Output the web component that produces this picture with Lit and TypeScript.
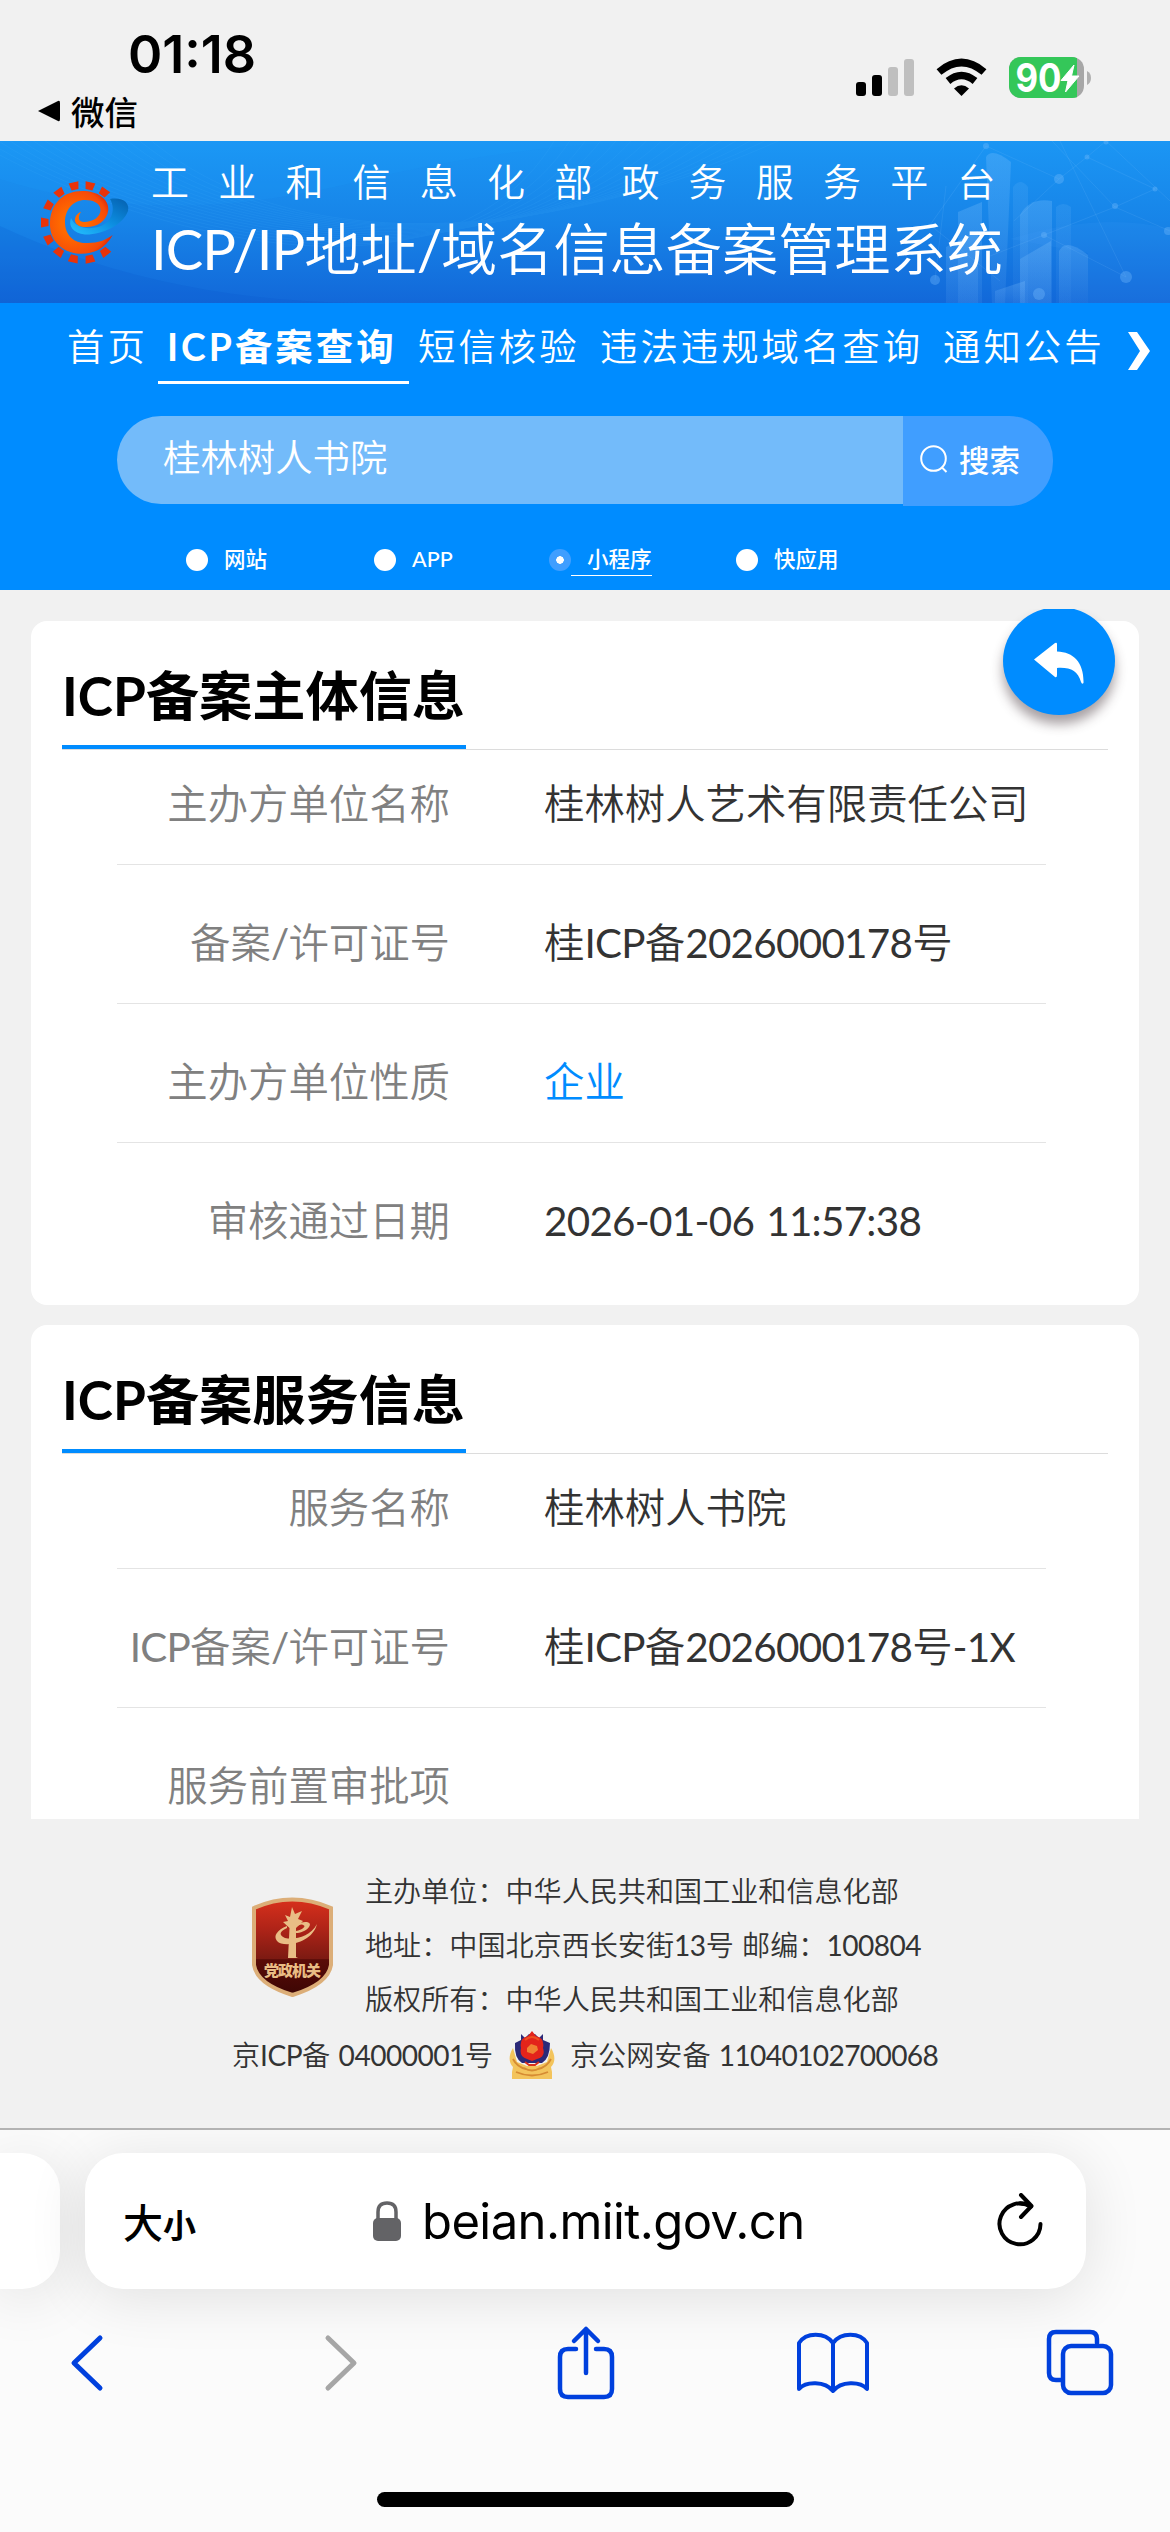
import {css, html, LitElement, svg} from 'lit';
import {customElement, property} from 'lit/decorators.js';
import {classMap} from 'lit/directives/class-map.js';

interface Row {
    label: string;
    value: string;
    link?: boolean;
}

const subjectRows: Row[] = [
    {label: '主办方单位名称', value: '桂林树人艺术有限责任公司'},
    {label: '备案/许可证号', value: '桂ICP备2026000178号'},
    {label: '主办方单位性质', value: '企业', link: true},
    {label: '审核通过日期', value: '2026-01-06 11:57:38'},
];

const serviceRows: Row[] = [
    {label: '服务名称', value: '桂林树人书院'},
    {label: 'ICP备案/许可证号', value: '桂ICP备2026000178号-1X'},
    {label: '服务前置审批项', value: ''},
];

const latinStyles = css`
    .latin {
        font-weight: 400;
        letter-spacing: -0.018em;
        word-spacing: 0.06em;
    }
`;

// Wraps latin runs, they are set tighter than the chinese text around them
const mixed = (text: string) =>
    text.split(/([A-Za-z0-9/:\- ]+)/).map((part, i) => (i % 2 ? html`<span class="latin">${part}</span>` : part));

@customElement('status-bar')
class StatusBar extends LitElement {
    static styles = css`
        :host {
            display: flex;
            justify-content: space-between;
            height: 141px;
            box-sizing: border-box;
            padding: 25px 76px 0 38px;
            background: #f1f1f1;
            color: #000;
        }
        .time {
            margin-left: 90px;
            height: 60px;
            font: 600 52px/60px Inter, sans-serif;
            letter-spacing: 0;
        }
        .back {
            display: flex;
            align-items: center;
            gap: 11px;
            height: 51px;
            font: 500 33.5px/51px "Noto Sans CJK SC", sans-serif;
        }
        .icons {
            display: block;
            margin-top: 28px;
        }
        .percent {
            font: 700 39px Inter, sans-serif;
        }
    `;

    render() {
        return html`
            <div>
                <div class="time">01:18</div>
                <div class="back">
                    <svg width="22" height="22" viewBox="0 0 22 22"><path d="M0 11 20 1Q22 0 22 3V19Q22 22 20 21Z"/></svg>
                    <span>微信</span>
                </div>
            </div>
            <svg class="icons" width="240" height="50" viewBox="0 0 240 50">
                <g transform="translate(0 6)">
                    <rect x="2" y="23" width="10" height="14" rx="3"/>
                    <rect x="18" y="16" width="10" height="21" rx="3"/>
                    <rect x="34" y="8" width="10" height="29" rx="3" fill="#bfbfbf"/>
                    <rect x="50" y="0" width="10" height="37" rx="3" fill="#bfbfbf"/>
                </g>
                <g transform="translate(82.500 6)">
                    <path d="M25 37 17.500 29.500Q25 23 32.500 29.500Z"/>
                    <g fill="none" stroke="#000" stroke-width="7.500">
                        <path d="M2.500 13Q25-6 47.500 13"/>
                        <path d="M11.500 22Q25 11 38.500 22"/>
                    </g>
                </g>
                <clipPath id="cell"><rect x="155" y="4" width="75" height="41" rx="12"/></clipPath>
                <g clip-path="url(#cell)">
                    <rect x="155" y="4" width="75" height="41" fill="#a7a7a7"/>
                    <rect x="155" y="4" width="68" height="41" fill="#34c759"/>
                </g>
                <path d="M233 18Q237 20 237 25T233 32Z" fill="#b0b0b0"/>
                <text class="percent" x="161.500" y="38.500" fill="#fff" textLength="46" lengthAdjust="spacingAndGlyphs">90</text>
                <path d="M220 12 207 27.500H214L211.500 39 225 23H217.500Z" fill="#fff" stroke="#fff" stroke-linejoin="round"/>
            </svg>
        `;
    }
}

@customElement('site-banner')
class SiteBanner extends LitElement {
    static styles = [latinStyles, css`
        :host {
            display: grid;
            height: 162px;
            overflow: hidden;
            background: linear-gradient(#1b96f4, #1784e8 50%, #1268d9);
            color: #fff;
        }
        .art, .content {
            grid-area: 1 / 1;
        }
        .content {
            display: flex;
            padding-left: 40px;
        }
        .logo {
            margin-top: 40px;
        }
        .titles {
            margin-left: 21px;
            white-space: nowrap;
        }
        .small {
            padding-top: 12px;
            font: 350 38px/56px Lato, "Noto Sans CJK SC", sans-serif;
            letter-spacing: 29.2px;
        }
        .large {
            padding-top: 2px;
            font: 350 56.2px/76px Lato, "Noto Sans CJK SC", sans-serif;
        }
    `];

    private waves() {
        return Array.from({length: 16}, (_, i) => svg`
            <path d="M${-40 + i * 12} ${-10}C${60 + i * 16} ${60 + i * 5} ${440 + i * 10} ${210 - i * 8} ${560 + i * 16} -10"/>
        `);
    }

    private teeth() {
        // The gear is open on the right, where the swoosh leaves it
        return [-54, -78, -102, -127, -153, -180, -207, -232, -257, -282, -308].map((a) => svg`
            <path d="M33.500-3.500 41-5V5L33.500 3.500Z" transform="rotate(${a})"/>
        `);
    }

    render() {
        return html`
            <svg class="art" width="1170" height="162" viewBox="0 0 1170 162">
                <defs>
                    <linearGradient id="bar" x2="0" y2="1">
                        <stop stop-color="#8cc8ff" stop-opacity=".25"/>
                        <stop offset="1" stop-color="#8cc8ff" stop-opacity=".09"/>
                    </linearGradient>
                </defs>
                <path d="M0 38Q160 90 360 40T800 0H0Z" fill="#20a4ff" opacity=".12"/>
                <path d="M0 85Q160 160 360 162H0Z" fill="#0a50c8" opacity=".14"/>
                <g fill="none" stroke="#45b4ff" opacity=".12">${this.waves()}</g>
                <g fill="url(#bar)">
                    <path d="M986 16Q992 6 1011 21L1005 162H992Z"/>
                    <path d="M958 71 982 61V162H958Z"/>
                    <path d="M1013 46Q1020 36 1028 46V162H1013Z" opacity=".5"/>
                    <path d="M1020 74Q1030 56 1052 60V162H1020Z"/>
                    <path d="M1056 66Q1063 60 1071 66V162H1056Z" opacity=".5"/>
                    <path d="M1059 110Q1066 96 1088 114V162H1059Z"/>
                    <path d="M946 106 978 90V162H946Z"/>
                    <path d="M1020 118 1051 100V162H1020Z"/>
                    <path d="M995 150 1025 140V162H995Z"/>
                </g>
                <path d="M1010 98Q1100 70 1170 88V162H1088V112Z" fill="#4da3ff" opacity=".1"/>
                <g fill="none" stroke="#8cc8ff" opacity=".13">
                    <path d="M986 5 930 84 1000 140M986 5 1059 38M1106 0 1087 16 1059 38 1014 80M1106 0 1170 60M1052 0 1115 66 1170 90M1060 0 1126 136M1115 66 1155 48 1087 16M1115 66 1044 94 990 115M1044 94 1126 136M935 139 946 45"/>
                </g>
                <g fill="#7cc0ff" opacity=".33">
                    <circle cx="986" cy="5" r="3"/><circle cx="1059" cy="38" r="5"/><circle cx="1087" cy="16" r="2.500"/>
                    <circle cx="1106" cy="1" r="2.500"/><circle cx="1115" cy="65" r="3"/><circle cx="1155" cy="48" r="2.500"/>
                    <circle cx="1126" cy="136" r="6"/><circle cx="935" cy="139" r="5"/><circle cx="1039" cy="153" r="6"/>
                    <circle cx="1044" cy="94" r="3"/><circle cx="1168" cy="90" r="4"/>
                </g>
            </svg>
            <div class="content">
                <svg class="logo" width="90" height="84" viewBox="0 0 90 84">
                    <defs>
                        <radialGradient id="gear" gradientUnits="userSpaceOnUse" cx="34" cy="42" r="42">
                            <stop offset=".3" stop-color="#ff6a00"/>
                            <stop offset=".8" stop-color="#f64a08"/>
                            <stop offset="1" stop-color="#d81e06"/>
                        </radialGradient>
                        <linearGradient id="swoosh" x1="0" y1="1" x2="1" y2="0">
                            <stop stop-color="#25c0ff"/>
                            <stop offset=".5" stop-color="#0d8fe2"/>
                            <stop offset="1" stop-color="#045fae"/>
                        </linearGradient>
                    </defs>
                    <path fill="url(#swoosh)" d="M70 18C83 16 90 22 88 30C83 44 62 54 45 53.500C33 52 28 45 31 37C35 46 46 49 58 46C70 43 77 30 70 18Z"/>
                    <g transform="translate(42 41.500)" fill="#e8330a">${this.teeth()}</g>
                    <path fill="url(#gear)" d="M72.700 54C64 70 50 74 36 72.500C18 69 9 56 10 40.700C11 22 24 10 42 10C58 10 69 18 68.300 29C67 41 55 47 44 46C33 45 32 35 41 30.700C37 37 39 41 44 41C53 41 60.500 36 60.500 29C60.500 22 53 19 45 19C33 19 25 29 25 41C25 56 36 63 48 62C58 62 66 59 72.700 54Z"/>
                </svg>
                <div class="titles">
                    <div class="small">工业和信息化部政务服务平台</div>
                    <div class="large">${mixed('ICP/IP地址/域名信息备案管理系统')}</div>
                </div>
            </div>
        `;
    }
}

@customElement('search-panel')
class SearchPanel extends LitElement {
    static styles = css`
        :host {
            display: block;
            height: 287px;
            overflow: hidden;
            background: #008cff;
            color: #fff;
            font-family: Lato, "Noto Sans CJK SC", sans-serif;
        }
        .nav {
            display: flex;
            height: 81px;
            padding-left: 58px;
            white-space: nowrap;
            font-size: 37.4px;
            font-weight: 350;
            line-height: 87px;
            letter-spacing: 3px;
        }
        .item {
            box-sizing: border-box;
            height: 81px;
            padding: 0 9px;
        }
        .item:first-child {
            width: 100px;
        }
        .item.active {
            width: 251px;
            border-bottom: 3px solid #fff;
            font-weight: 700;
        }
        .item:nth-child(3) {
            width: 182px;
        }
        .item:nth-child(4) {
            width: 343px;
        }
        .item:nth-child(5) {
            width: 194px;
        }
        .arrow {
            margin-top: 29px;
        }
        .search {
            display: flex;
            align-items: flex-start;
            width: 936px;
            margin: 32px 0 0 117px;
        }
        .field {
            box-sizing: border-box;
            width: 786px;
            height: 88px;
            padding-left: 46px;
            border-radius: 44px 0 0 44px;
            background: #73bbfa;
            font-size: 37.4px;
            font-weight: 350;
            line-height: 84px;
        }
        .button {
            display: flex;
            align-items: center;
            box-sizing: border-box;
            gap: 11px;
            width: 150px;
            height: 90px;
            padding: 0 0 4px 17px;
            border-radius: 0 44px 44px 0;
            background: #409eff;
            font-size: 30.5px;
            font-weight: 500;
        }
        .radios {
            display: flex;
            margin: 38px 0 0 186px;
            height: 34px;
            font-size: 21.5px;
            line-height: 30px;
        }
        .radio {
            display: flex;
            align-items: flex-start;
            width: 188px;
        }
        .radio:nth-child(2) {
            width: 175px;
        }
        .radio:nth-child(3) {
            width: 187px;
        }
        .dot {
            width: 22px;
            height: 22px;
            margin-top: 5px;
            border-radius: 50%;
            background: #fff;
        }
        .text {
            height: 31px;
            padding-left: 16px;
            font-weight: 450;
        }
        .selected .dot {
            background: radial-gradient(circle, #fff 3.5px, #409eff 4px);
        }
        .selected .text {
            border-bottom: 1px solid #fff;
        }
    `;

    render() {
        const items = ['首页', 'ICP备案查询', '短信核验', '违法违规域名查询', '通知公告'];
        const kinds = ['网站', 'APP', '小程序', '快应用'];
        return html`
            <div class="nav">
                ${items.map((item, i) => html`<div class=${classMap({item: true, active: i === 1})}>${item}</div>`)}
                <svg class="arrow" width="22" height="38" viewBox="0 0 22 38">
                    <path d="M0 0H9L22 19 9 38H0L12 19Z" fill="#fff"/>
                </svg>
            </div>
            <div class="search">
                <div class="field">桂林树人书院</div>
                <div class="button">
                    <svg width="28" height="28" viewBox="0 0 28 28" fill="none" stroke="#fff" stroke-width="2">
                        <circle cx="13.500" cy="13.500" r="12.300"/>
                        <path d="m21.500 22 5 5"/>
                    </svg>
                    <span>搜索</span>
                </div>
            </div>
            <div class="radios">
                ${kinds.map((kind, i) => html`
                    <div class=${classMap({radio: true, selected: i === 2})}>
                        <div class="dot"></div>
                        <div class="text">${kind}</div>
                    </div>
                `)}
            </div>
        `;
    }
}

@customElement('info-card')
class InfoCard extends LitElement {
    @property() heading = '';
    @property({attribute: false}) rows: Row[] = [];

    static styles = [latinStyles, css`
        :host {
            display: block;
            box-sizing: border-box;
            flex: none;
            padding: 0 31px;
            border-radius: 16px;
            background: #fff;
            font-family: Lato, "Noto Sans CJK SC", sans-serif;
        }
        .head {
            display: flex;
            height: 128px;
            border-bottom: 1px solid #dcdcdc;
        }
        .title {
            box-sizing: border-box;
            width: 404px;
            height: 128px;
            padding-top: 36px;
            border-bottom: 4px solid #008cff;
            color: #000;
            font-size: 53.2px;
            font-weight: 700;
            line-height: 76px;
            white-space: nowrap;
        }
        .row {
            display: flex;
            box-sizing: border-box;
            width: 929px;
            height: 139px;
            margin-left: 55px;
            padding-top: 48px;
            border-bottom: 1px solid #e4e4e4;
            font-size: 40.4px;
            font-weight: 350;
            line-height: 60px;
            white-space: nowrap;
        }
        .row:nth-child(2) {
            height: 115px;
            padding-top: 24px;
        }
        .row:last-child {
            border-bottom: 0;
        }
        .label {
            width: 333px;
            text-align: right;
            color: #808080;
        }
        .value {
            margin-left: 94px;
            color: #333;
        }
        .value.link {
            color: #008cff;
        }
    `];

    render() {
        return html`
            <div class="head"><div class="title">${this.heading}</div></div>
            ${this.rows.map((row) => html`
                <div class="row">
                    <div class="label">${mixed(row.label)}</div>
                    <div class=${classMap({value: true, link: !!row.link})}>${mixed(row.value)}</div>
                </div>
            `)}
        `;
    }
}

@customElement('site-footer')
class SiteFooter extends LitElement {
    static styles = [latinStyles, css`
        :host {
            display: block;
            box-sizing: border-box;
            height: 309px;
            padding-top: 45px;
            background: #f1f1f1;
            color: #333;
            font: 350 28.1px/54px Lato, "Noto Sans CJK SC", sans-serif;
            white-space: nowrap;
        }
        .top {
            display: flex;
            gap: 32px;
            margin-left: 252px;
        }
        .badge {
            margin-top: 33px;
        }
        .badge-text {
            font: 900 15px "Noto Sans CJK SC", sans-serif;
        }
        .bottom {
            display: flex;
            align-items: center;
            height: 58px;
            margin-left: 232px;
        }
        .licence {
            width: 277px;
        }
        .police {
            margin-right: 15px;
        }
        .police + span .latin {
            letter-spacing: -0.022em;
        }
    `];

    render() {
        return html`
            <div class="top">
                <svg class="badge" width="81" height="100" viewBox="0 0 81 100">
                    <defs>
                        <linearGradient id="shield" x2="0" y2="1">
                            <stop stop-color="#d8301c"/>
                            <stop offset=".3" stop-color="#b02418"/>
                            <stop offset=".62" stop-color="#7c1a12"/>
                            <stop offset=".63" stop-color="#5a0c08"/>
                            <stop offset="1" stop-color="#3c0604"/>
                        </linearGradient>
                    </defs>
                    <path d="M2 11Q40-6 79 11V68Q76 87 40.500 98Q5 87 2 68Z" fill="url(#shield)" stroke="#dcae78" stroke-width="4"/>
                    <path fill="#e9bd85" d="M36 61 37.500 31 31 25 36 24 33 18 38 20 40 10 43 17 50 14 46 22 51 24 44 31V60L46 61Z"/>
                    <path fill="#e9bd85" d="M35 29C25 33 21 39 25 44C31 51 60 47 65 27C58 40 43 43 33 41C26 38 28 34 35 31ZM44 28C52 23 61 25 57 30C54 34 48 36 44 36V34C50 33 55 29 51 28C49 27 47 28 44 30Z"/>
                    <text class="badge-text" x="40.500" y="78.500" text-anchor="middle" fill="#e9bd85" textLength="57">党政机关</text>
                </svg>
                <div>
                    <div>主办单位：中华人民共和国工业和信息化部</div>
                    <div>${mixed('地址：中国北京西长安街13号 邮编：100804')}</div>
                    <div>版权所有：中华人民共和国工业和信息化部</div>
                </div>
            </div>
            <div class="bottom">
                <span class="licence">${mixed('京ICP备 04000001号')}</span>
                <svg class="police" width="46" height="50" viewBox="0 0 46 50">
                    <path d="M4 18C-1 26 0 33 4 37L3 42V49H43V42L42 37C46 33 47 26 42 18L38 32 28 36H18L8 32Z" fill="#f3c45c"/>
                    <path d="M4 29Q8 37 17 39M42 29Q38 37 29 39M7 42Q23 49 39 42M15 38Q23 43 31 38" fill="none" stroke="#d68b32" stroke-width="1.800"/>
                    <path d="M12 4 16 8 20 4H26L30 8 34 4V10L41 13Q41 28 33 33H13Q5 28 6 13L12 10Z" fill="#2b2a78"/>
                    <path d="M23 1 27 6Q36 8 34 18Q37 27 28 29L23 31 18 29Q10 27 12 18Q10 8 19 6Z" fill="#e3241b"/>
                    <path d="M16 10Q23 4 30 10" fill="none" stroke="#f0501e" stroke-width="2"/>
                    <path d="M18 18 22 14 28 16 29 20 24 24 18 22Z" fill="#f08232"/>
                    <path d="M16 32 20 35H26L30 32" fill="none" stroke="#d8301c" stroke-width="2"/>
                </svg>
                <span>${mixed('京公网安备 11040102700068')}</span>
            </div>
        `;
    }
}

@customElement('browser-bar')
class BrowserBar extends LitElement {
    static styles = css`
        :host {
            display: block;
            box-sizing: border-box;
            height: 404px;
            overflow: hidden;
            border-top: 2px solid #b3b3b3;
            background: #fbfbfb;
            color: #000;
        }
        .tabs {
            display: flex;
            gap: 25px;
            padding-top: 23px;
        }
        .previous, .address {
            flex: none;
            height: 136px;
            background: #fff;
            box-shadow: 0 8px 60px rgba(0, 0, 0, 0.11);
        }
        .previous {
            width: 60px;
            border-radius: 0 38px 38px 0;
        }
        .address {
            display: flex;
            align-items: center;
            box-sizing: border-box;
            width: 1001px;
            padding: 0 43px 0 38px;
            border-radius: 38px;
        }
        .big {
            font: 500 40px/60px "Noto Sans CJK SC", sans-serif;
        }
        .little {
            width: 34px;
            padding-top: 5px;
            font: 600 33px/60px "Noto Sans CJK SC", sans-serif;
        }
        .lock {
            margin-left: 176px;
        }
        .url {
            flex: 1;
            margin-left: 21px;
            padding-top: 2px;
            font: 400 49px/60px Inter, sans-serif;
            letter-spacing: -0.6px;
        }
        .tools {
            display: flex;
            align-items: center;
            height: 76px;
            margin: 36px 0 0 69px;
            fill: none;
            stroke: #0040dd;
            stroke-width: 5;
            stroke-linecap: round;
            stroke-linejoin: round;
        }
        .forward {
            margin-left: 218px;
            stroke: #a6a6a6;
        }
        .share {
            margin-left: 197px;
        }
        .book {
            margin-left: 180px;
        }
        .pages {
            margin-left: 175px;
        }
        .home {
            width: 417px;
            height: 15px;
            margin: 91px auto 0 377px;
            border-radius: 8px;
            background: #000;
        }
    `;

    render() {
        return html`
            <div class="tabs">
                <div class="previous"></div>
                <div class="address">
                    <span class="big">大</span><span class="little">小</span>
                    <svg class="lock" width="28" height="40" viewBox="0 0 28 40">
                        <rect x="0" y="17" width="28" height="23" rx="5" fill="#636366"/>
                        <path d="M5 20V11Q5 2 14 2T23 11V20" fill="none" stroke="#636366" stroke-width="3.500"/>
                    </svg>
                    <span class="url">beian.miit.gov.cn</span>
                    <svg width="46" height="56" viewBox="0 0 46 56" fill="none" stroke="#000" stroke-width="4" stroke-linecap="round" stroke-linejoin="round">
                        <path d="M43.500 31A20.500 20.500 0 1 1 34 13.500M24 2 34.500 13 24 24"/>
                        <path d="M23 10.500Q29 10.500 34 13.500"/>
                    </svg>
                </div>
            </div>
            <div class="tools">
                <svg width="36" height="60" viewBox="0 0 36 60"><path d="M31 5 5 30 31 55"/></svg>
                <svg class="forward" width="36" height="60" viewBox="0 0 36 60"><path d="M5 5 31 30 5 55"/></svg>
                <svg class="share" width="60" height="76" viewBox="0 0 60 76" stroke-width="4.500">
                    <path d="M20 24H12Q4 24 4 32V64Q4 72 12 72H48Q56 72 56 64V32Q56 24 48 24H40M30 48V4M18 16 30 4 42 16"/>
                </svg>
                <svg class="book" width="74" height="64" viewBox="0 0 74 64" stroke-width="4">
                    <path d="M37 12C29 1 10 1 3 12V58C10 50 29 50 37 60C45 50 64 50 71 58V12C64 1 45 1 37 12V60"/>
                </svg>
                <svg class="pages" width="70" height="70" viewBox="0 0 70 70" stroke-width="4.500">
                    <path d="M16 52H11Q4 52 4 45V11Q4 4 11 4H45Q52 4 52 11V15"/>
                    <rect x="18" y="18" width="48" height="47" rx="8"/>
                </svg>
            </div>
            <div class="home"></div>
        `;
    }
}

@customElement('app-root')
class AppRoot extends LitElement {
    static styles = css`
        :host {
            display: block;
            width: 1170px;
            height: 2532px;
            overflow: hidden;
            background: #f1f1f1;
        }
        .results {
            display: flex;
            flex-direction: column;
            position: relative;
            gap: 20px;
            box-sizing: border-box;
            height: 1229px;
            padding: 31px 31px 0;
            overflow: hidden;
        }
        .subject {
            height: 684px;
        }
        .return {
            position: absolute;
            top: 19px;
            right: 30px;
            width: 162px;
            height: 140px;
            overflow: hidden;
        }
        .circle {
            display: grid;
            place-items: center;
            width: 112px;
            height: 108px;
            margin: -2px 0 0 25px;
            border-radius: 50%;
            background: #008cff;
            box-shadow: 0 9px 12px rgba(60, 45, 50, 0.45);
        }
        .arrow {
            margin-top: 4px;
        }
    `;

    render() {
        return html`
            <status-bar></status-bar>
            <site-banner></site-banner>
            <search-panel></search-panel>
            <div class="results">
                <info-card class="subject" heading="ICP备案主体信息" .rows=${subjectRows}></info-card>
                <info-card heading="ICP备案服务信息" .rows=${serviceRows}></info-card>
                <div class="return">
                    <div class="circle">
                        <svg class="arrow" width="50" height="42" viewBox="0 0 50 42">
                            <path d="M0 17.500 21 1Q23 0 23 2V9.500C40 10 50 21 49.500 41Q48 43 47 40C44 29 36 25 23 26V33Q23 36 21 35Z" fill="#fff"/>
                        </svg>
                    </div>
                </div>
            </div>
            <site-footer></site-footer>
            <browser-bar></browser-bar>
        `;
    }
}
